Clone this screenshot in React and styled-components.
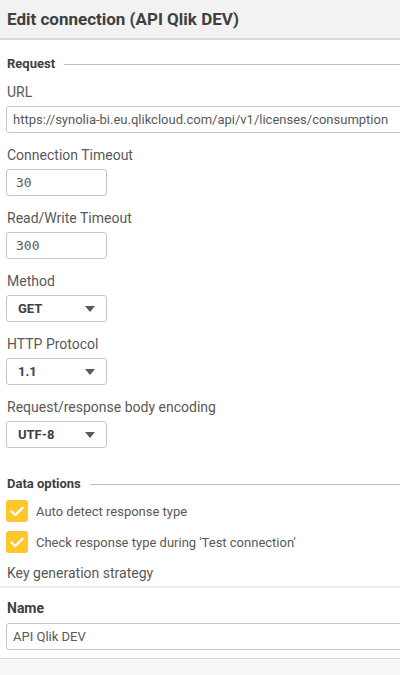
import React from 'react';
import styled, { createGlobalStyle } from 'styled-components';

const GlobalStyle = createGlobalStyle`
  html, body {
    margin: 0;
    padding: 0;
    background: #ffffff;
  }
  body {
    font-family: Roboto, "Liberation Sans", sans-serif;
    color: #595959;
  }
`;

const Panel = styled.div`
  width: 400px;
  height: 675px;
  overflow: hidden;
  display: flex;
  flex-flow: column;
  background: #fff;
`;

const Header = styled.div`
  height: 38px;
  flex-shrink: 0;
  display: flex;
  align-items: center;
  padding-left: 7px;
  background: #f2f2f2;
  border-bottom: 2px solid #d9d9d9;
  font-size: 17px;
  font-weight: 700;
  color: #404040;
`;

const Form = styled.div`
  padding: 0 0 0 6px;
  display: flex;
  flex-flow: column;
`;

const SectionTitle = styled.div`
  display: flex;
  align-items: center;
  gap: 9px;
  height: 18px;
  margin-top: ${p => p.$top || 14}px;
  padding-left: 1px;
  font-size: 13px;
  font-weight: 700;
  color: #404040;
  &::after {
    content: '';
    flex: 1;
    height: 1px;
    background: #bdbdbd;
    margin-top: 3px;
  }
`;

const Field = styled.div`
  display: flex;
  flex-flow: column;
  margin-top: ${p => p.$top || 0}px;
  margin-bottom: ${p => (p.$bottom === undefined ? 13 : p.$bottom)}px;
`;

const Label = styled.div`
  height: 18px;
  line-height: 18px;
  padding-left: 1px;
  margin-top: ${p => p.$top || 0}px;
  font-size: 14px;
  font-weight: ${p => (p.$bold ? 700 : 400)};
  color: ${p => (p.$bold ? '#404040' : '#595959')};
  white-space: nowrap;
`;

const Input = styled.div`
  box-sizing: border-box;
  margin-top: ${p => p.$gap || 5}px;
  width: ${p => p.$width || 'calc(100% + 10px)'};
  height: 27px;
  display: flex;
  align-items: center;
  padding-left: ${p => (p.$mono ? 9 : 6)}px;
  border: 1px solid #c6c6c6;
  border-radius: 3px;
  font-family: ${p => (p.$mono ? '"DejaVu Sans Mono", "Liberation Mono", monospace' : 'Roboto, "Liberation Sans", sans-serif')};
  font-size: 13px;
  color: #595959;
  white-space: nowrap;
`;

const Select = styled.div`
  box-sizing: border-box;
  margin-top: 5px;
  width: 101px;
  height: 27px;
  display: flex;
  align-items: center;
  justify-content: space-between;
  padding: 0 11px 0 11px;
  border: 1px solid #c6c6c6;
  border-radius: 3px;
  font-size: 13px;
  font-weight: 700;
  color: #404040;
`;

const Caret = styled.span`
  width: 0;
  height: 0;
  border-left: 5px solid transparent;
  border-right: 5px solid transparent;
  border-top: 6px solid #595959;
`;

const CheckRow = styled.div`
  display: flex;
  align-items: center;
  gap: 8px;
  margin-top: ${p => p.$top}px;
  font-size: 13px;
  color: #595959;
`;

const Box = styled.span`
  width: 22px;
  height: 22px;
  border-radius: 3px;
  background: #ffc72c;
  display: flex;
  align-items: center;
  justify-content: center;
`;

const Divider = styled.div`
  height: 2px;
  background: #ececec;
  margin-top: 4px;
`;

const Footer = styled.div`
  flex: 1;
  background: #f7f7f7;
  border-top: 1px solid #d6d6d6;
`;

const Check = () => (
  <svg width="14" height="11" viewBox="0 0 14 11">
    <path d="M1.5 5.5 L5.2 9 L12.5 1.8" fill="none" stroke="#fff" strokeWidth="2.4" strokeLinecap="round" strokeLinejoin="round" />
  </svg>
);

const Dropdown = ({ label, value }) => (
  <Field>
    <Label>{label}</Label>
    <Select>
      {value}
      <Caret />
    </Select>
  </Field>
);

export default function App() {
  return (
    <Panel>
      <GlobalStyle />
      <Header>Edit connection (API Qlik DEV)</Header>
      <Form>
        <SectionTitle>Request</SectionTitle>
        <Field $top={11}>
          <Label>URL</Label>
          <Input>https://synolia-bi.eu.qlikcloud.com/api/v1/licenses/consumption</Input>
        </Field>
        <Field>
          <Label>Connection Timeout</Label>
          <Input $width="101px" $mono>30</Input>
        </Field>
        <Field>
          <Label>Read/Write Timeout</Label>
          <Input $width="101px" $mono>300</Input>
        </Field>
        <Dropdown label="Method" value="GET" />
        <Dropdown label="HTTP Protocol" value="1.1" />
        <Dropdown label="Request/response body encoding" value="UTF-8" />
        <SectionTitle $top={13}>Data options</SectionTitle>
        <CheckRow $top={8}>
          <Box><Check /></Box>
          Auto detect response type
        </CheckRow>
        <CheckRow $top={9}>
          <Box><Check /></Box>
          Check response type during 'Test connection'
        </CheckRow>
        <Label $top={11}>Key generation strategy</Label>
      </Form>
      <Divider />
      <Form>
        <Field $top={11} $bottom={8}>
          <Label $bold>Name</Label>
          <Input $gap={6}>API Qlik DEV</Input>
        </Field>
      </Form>
      <Footer />
    </Panel>
  );
}
